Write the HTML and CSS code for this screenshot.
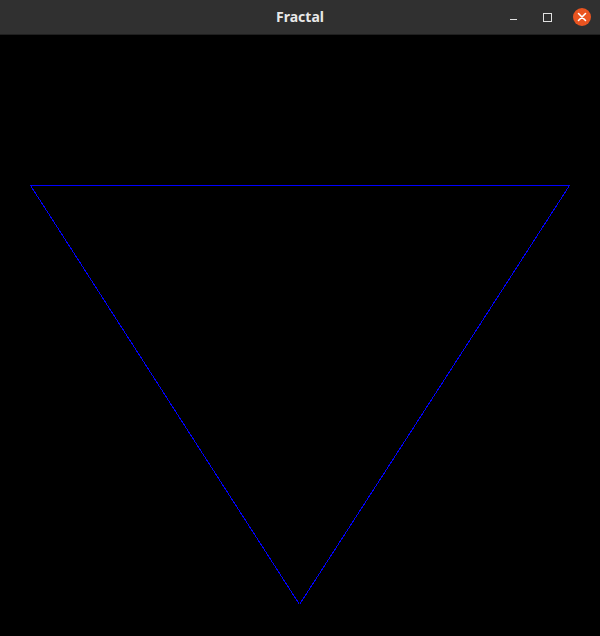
FILE: index.html
```html
<!DOCTYPE html>
<html>
<head>
<meta charset="utf-8">
<link rel="stylesheet" href="styles.css">
</head>
<body>
<div class="window">
  <header class="titlebar">
    <div class="title">Fractal</div>
    <div class="controls">
      <span class="btn min"></span>
      <span class="btn max"></span>
      <span class="btn close">
        <svg width="18" height="18" viewBox="0 0 18 18"><path d="M5.5 5.5 L12.5 12.5 M12.5 5.5 L5.5 12.5" stroke="#fff" stroke-width="1.6" stroke-linecap="round"/></svg>
      </span>
    </div>
  </header>
  <main class="canvas">
    <svg width="600" height="601" viewBox="0 0 600 601" shape-rendering="crispEdges">
      <line x1="30.5" y1="150.5" x2="569.5" y2="150.5" stroke="#0000ff" stroke-width="1"/>
      <line x1="569.5" y1="150.5" x2="299.5" y2="569.5" stroke="#0000ff" stroke-width="1"/>
      <line x1="299.5" y1="569.5" x2="30.5" y2="150.5" stroke="#0000ff" stroke-width="1"/>
    </svg>
  </main>
</div>
</body>
</html>
```
FILE: styles.css
```css
html, body { margin: 0; padding: 0; background: #000; }
.window { width: 600px; height: 636px; display: flex; flex-direction: column; }
.titlebar {
  height: 35px; flex: none; background: #303030; position: relative;
  display: flex; align-items: center; justify-content: center;
  border-bottom: 1px solid #1f1f1f; box-sizing: border-box;
}
.title { font-family: "Noto Sans", "DejaVu Sans", sans-serif; font-weight: bold; font-size: 14px; color: #e8e8e8; margin-top: -1px; }
.controls { position: absolute; right: 9px; top: 8px; display: flex; align-items: center; gap: 0; }
.btn { display: block; }
.min { width: 7px; height: 1px; background: #e0e0e0; margin-right: 26px; margin-top: 5px; }
.max { width: 7px; height: 7px; border: 1px solid #e0e0e0; margin-right: 21px; }
.close { width: 18px; height: 18px; border-radius: 50%; background: #e95420; }
.close svg { display: block; }
.canvas { flex: 1; background: #000; }
.canvas svg { display: block; }
```
